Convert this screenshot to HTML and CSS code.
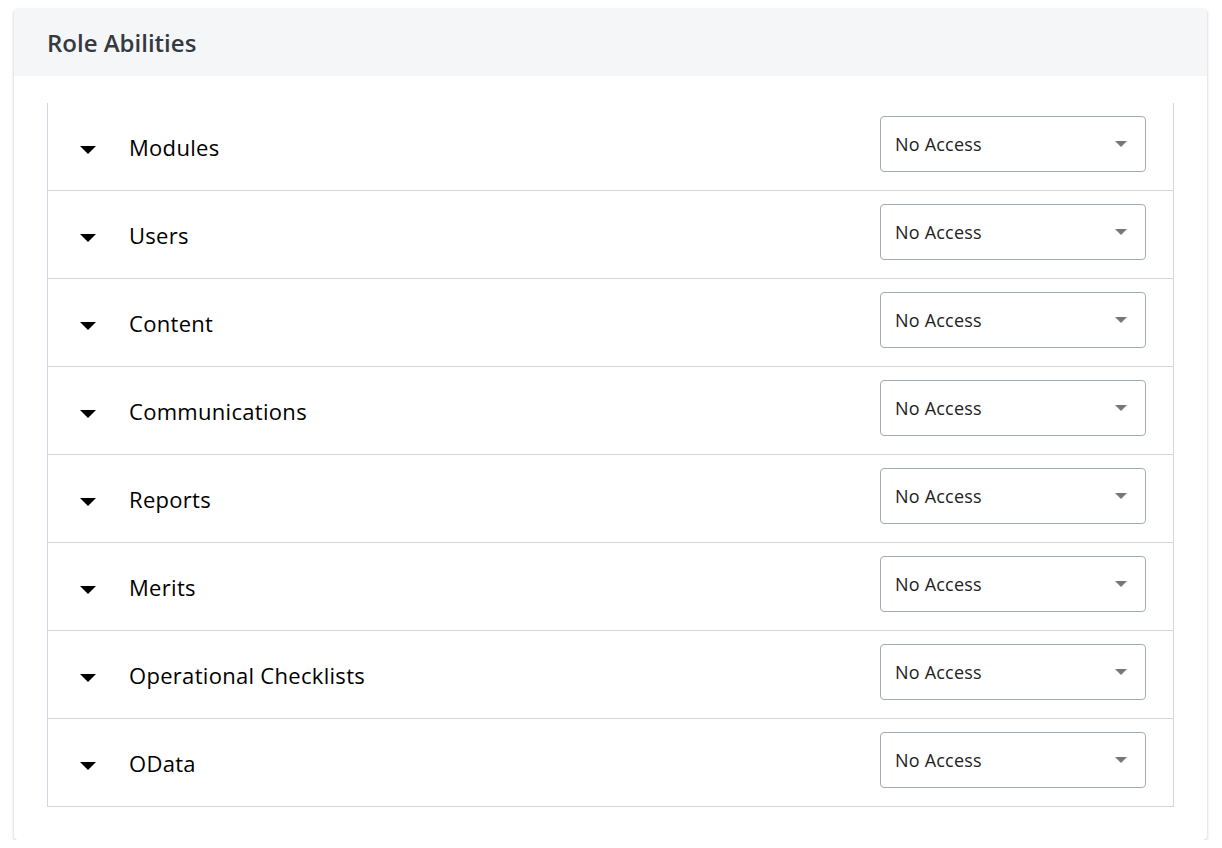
FILE: index.html
```html
<!DOCTYPE html>
<html lang="en">
<head>
  <meta charset="UTF-8">
  <title>Role Abilities</title>
  <link rel="stylesheet" href="styles.css">
</head>
<body>
  <div class="card">
    <div class="card-header">
      <h2>Role Abilities</h2>
    </div>
    <div class="card-body">
      <div class="abilities">
        <div class="ability">
          <svg class="toggle" width="16" height="8" viewBox="0 0 16 8"><path d="M0 0h16L8 8z"/></svg>
          <span class="name">Modules</span>
          <div class="select"><span>No Access</span><svg width="12" height="6" viewBox="0 0 12 6"><path d="M0 0h12L6 6z"/></svg></div>
        </div>
        <div class="ability">
          <svg class="toggle" width="16" height="8" viewBox="0 0 16 8"><path d="M0 0h16L8 8z"/></svg>
          <span class="name">Users</span>
          <div class="select"><span>No Access</span><svg width="12" height="6" viewBox="0 0 12 6"><path d="M0 0h12L6 6z"/></svg></div>
        </div>
        <div class="ability">
          <svg class="toggle" width="16" height="8" viewBox="0 0 16 8"><path d="M0 0h16L8 8z"/></svg>
          <span class="name">Content</span>
          <div class="select"><span>No Access</span><svg width="12" height="6" viewBox="0 0 12 6"><path d="M0 0h12L6 6z"/></svg></div>
        </div>
        <div class="ability">
          <svg class="toggle" width="16" height="8" viewBox="0 0 16 8"><path d="M0 0h16L8 8z"/></svg>
          <span class="name">Communications</span>
          <div class="select"><span>No Access</span><svg width="12" height="6" viewBox="0 0 12 6"><path d="M0 0h12L6 6z"/></svg></div>
        </div>
        <div class="ability">
          <svg class="toggle" width="16" height="8" viewBox="0 0 16 8"><path d="M0 0h16L8 8z"/></svg>
          <span class="name">Reports</span>
          <div class="select"><span>No Access</span><svg width="12" height="6" viewBox="0 0 12 6"><path d="M0 0h12L6 6z"/></svg></div>
        </div>
        <div class="ability">
          <svg class="toggle" width="16" height="8" viewBox="0 0 16 8"><path d="M0 0h16L8 8z"/></svg>
          <span class="name">Merits</span>
          <div class="select"><span>No Access</span><svg width="12" height="6" viewBox="0 0 12 6"><path d="M0 0h12L6 6z"/></svg></div>
        </div>
        <div class="ability">
          <svg class="toggle" width="16" height="8" viewBox="0 0 16 8"><path d="M0 0h16L8 8z"/></svg>
          <span class="name">Operational Checklists</span>
          <div class="select"><span>No Access</span><svg width="12" height="6" viewBox="0 0 12 6"><path d="M0 0h12L6 6z"/></svg></div>
        </div>
        <div class="ability">
          <svg class="toggle" width="16" height="8" viewBox="0 0 16 8"><path d="M0 0h16L8 8z"/></svg>
          <span class="name">OData</span>
          <div class="select"><span>No Access</span><svg width="12" height="6" viewBox="0 0 12 6"><path d="M0 0h12L6 6z"/></svg></div>
        </div>
      </div>
    </div>
  </div>
</body>
</html>
```

FILE: styles.css
```css
body {
  margin: 0;
  padding: 9px 15px 0 14px;
  background: #fff;
  font-family: 'Open Sans', 'Liberation Sans', sans-serif;
}
.card {
  background: #fff;
  border-radius: 4px;
  box-shadow: 0 1px 3px rgba(0, 0, 0, 0.25);
  overflow: hidden;
}
.card-header {
  background: #f5f6f8;
  height: 67px;
  display: flex;
  align-items: center;
  padding: 0 33px;
}
.card-header h2 {
  margin: 0;
  font-size: 24px;
  font-weight: 600;
  color: #343a40;
}
.card-body {
  padding: 27px 33px 33px;
}
.abilities {
  border: 1px solid #d4d5e0;
  border-top: none;
}
.ability {
  display: flex;
  align-items: center;
  height: 87px;
  box-sizing: border-box;
  padding: 13px 27px 18px 32px;
}
.ability + .ability {
  border-top: 1px solid #d4d5e0;
  height: 88px;
}
.toggle {
  fill: #000;
  margin-top: 12px;
  margin-right: 33px;
}
.name {
  flex: 1;
  font-size: 22px;
  font-weight: 500;
  letter-spacing: 0.3px;
  color: #000;
  padding-top: 6px;
}
.select {
  width: 266px;
  height: 56px;
  box-sizing: border-box;
  border: 1px solid #a3aaba;
  border-radius: 4px;
  display: flex;
  align-items: center;
  justify-content: space-between;
  padding: 0 18px 0 14px;
  font-size: 18px;
  letter-spacing: 0.2px;
  color: #222;
}
.select svg {
  fill: #777;
}
```
